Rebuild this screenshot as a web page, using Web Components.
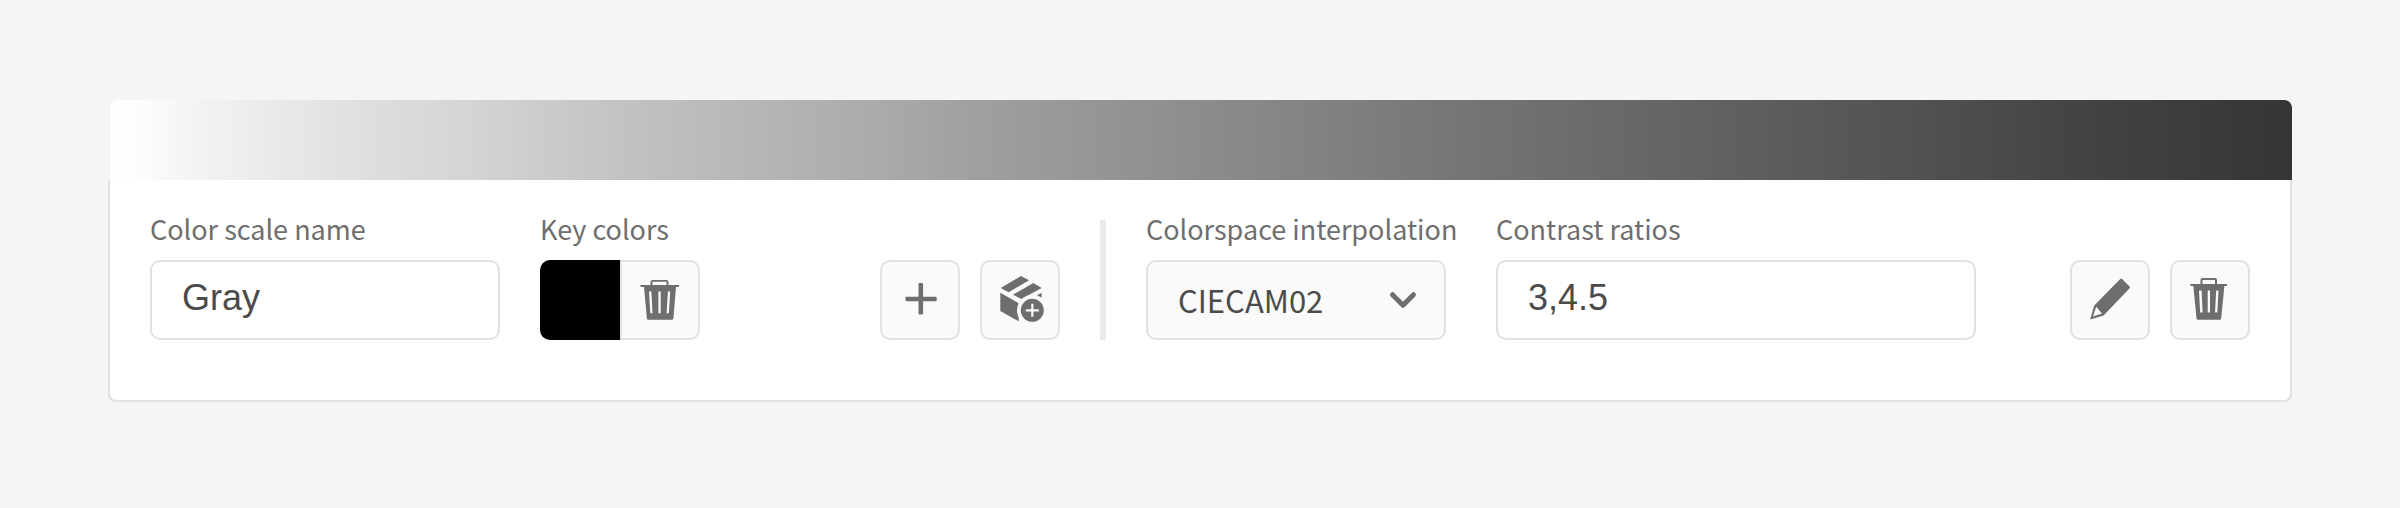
<!DOCTYPE html>
<html lang="en">
<head>
<meta charset="utf-8">
<title>Color scale</title>
<style>
body { margin: 0; background: #f5f5f5; color: #6e6e6e; font-family: "Noto Sans CJK SC", "Open Sans", sans-serif; }
</style>
</head>
<body>
<color-scale-card></color-scale-card>
<script>
const icons = {
  plus: '<path d="M38.5 24a1 1 0 0 1 1-1h2.6a1 1 0 0 1 1 1v12.700h12.600a1 1 0 0 1 1 1v2.600a1 1 0 0 1-1 1H43.100V53.500a1 1 0 0 1-1 1h-2.600a1 1 0 0 1-1-1V41.300H26.500a1 1 0 0 1-1-1v-2.600a1 1 0 0 1 1-1h12z"/>',
  box: '<path d="M41 16l8 4.300-20.300 12L20.700 28zM53.300 23l8.400 5-20.400 11L33 34.700zM20.300 32.700L38.700 43.200V61.300L20.300 51z"/><circle cx="52.300" cy="50.300" r="15.300" fill="#fafafa"/><path d="M57 35.300l4.700-2.500v4.700z"/><circle cx="52.300" cy="50.300" r="11.500"/><path d="M52.300 43.800v13M45.800 50.300h13" stroke="#fafafa" stroke-width="2.200"/>',
  pencil: '<path fill-rule="evenodd" d="M50.200 18.900q.9-.9 1.800 0l7.600 7.600q.9.900 0 1.800L33.600 55.400 21 59.200q-.9.200-.6-.7L24.300 45.500zM26.200 46.800L23 56.400 32 53.400z"/>',
  trash: '<path fill-rule="evenodd" d="M30.500 24v-4q0-2 2-2H45q2 0 2 2v4h10v2h-2.600l-3.200 32.300q-.2 1.500-1.600 1.500H28q-1.400 0-1.500-1.500L23.300 26h-3v-2zM32.500 24H45v-4H32.500zM29 31l1.200 21.500h2.400L31.600 30.500H29.500zM37.700 30.500V52.500h2.300V30.500zM46.200 30.500L45 52.500h2.300L48.500 31l-.4-.5z"/>',
  trashSmall: '<path fill-rule="evenodd" d="M30.500 25v-3.200q0-1.800 2-1.800H46.500q2 0 2 1.800V25H59v2h-3l-2.600 31.500q-.2 1.300-1.700 1.300H28.500q-1.500 0-1.600-1.300L24 27h-3.500v-2zM32.500 25H46.500v-3.200H32.500zM29 31.500l1.300 21.800h2.200L31.400 31.500zM38.400 31.500V53.300h2.300V31.500zM47.900 31.500L46.600 53.300h2.300L50.200 31.500z"/>'
};

class IconButton extends HTMLElement {
  connectedCallback() {
    this.attachShadow({ mode: 'open' }).innerHTML = `
      <style>
        :host { display: block; flex: none; }
        button { display: block; box-sizing: border-box; width: 80px; height: 80px; padding: 0;
          border: 2px solid #e1e1e1; border-radius: var(--button-radius, 10px); background: #fafafa; color: #6e6e6e; }
        svg { display: block; fill: currentColor; }
      </style>
      <button type="button" aria-label="${this.getAttribute('label')}">
        <svg width="76" height="76" viewBox="2 2 76 76" aria-hidden="true">${icons[this.getAttribute('icon')]}</svg>
      </button>`;
  }
}
customElements.define('icon-button', IconButton);

const fieldStyle = `
  :host { display: block; min-width: 0; }
  label { display: block; height: 40px; font-size: 27px; line-height: 18px; white-space: nowrap; }
`;

class TextField extends HTMLElement {
  connectedCallback() {
    this.attachShadow({ mode: 'open' }).innerHTML = `
      <style>
        ${fieldStyle}
        input { display: block; box-sizing: border-box; width: 100%; height: 80px; margin: 0; padding: 0 30px 4px;
          border: 2px solid #e1e1e1; border-radius: 10px; background: #fff; color: #4b4b4b;
          font-family: "Liberation Sans", Arial, sans-serif; font-size: 36px; }
      </style>
      <label for="field">${this.getAttribute('label')}</label>
      <input id="field" type="text" value="${this.getAttribute('value')}">`;
  }
}
customElements.define('text-field', TextField);

class SelectField extends HTMLElement {
  connectedCallback() {
    this.attachShadow({ mode: 'open' }).innerHTML = `
      <style>
        ${fieldStyle}
        .box { display: grid; }
        select, svg { grid-area: 1 / 1; }
        select { appearance: none; box-sizing: border-box; width: 100%; height: 80px; margin: 0; padding: 0 80px 2px 30px;
          border: 2px solid #e1e1e1; border-radius: 10px; background: #fafafa; color: #4b4b4b;
          font-family: inherit; font-size: 31px; }
        svg { justify-self: end; pointer-events: none; fill: none; stroke: #6e6e6e; stroke-width: 5; stroke-linecap: round; stroke-linejoin: round; }
      </style>
      <label for="field">${this.getAttribute('label')}</label>
      <div class="box">
        <select id="field"><option>${this.getAttribute('value')}</option></select>
        <svg width="80" height="80" viewBox="0 0 80 80" aria-hidden="true"><path d="M26.500 34.700L37 45.200 47.500 34.700"/></svg>
      </div>`;
  }
}
customElements.define('select-field', SelectField);

class KeyColors extends HTMLElement {
  connectedCallback() {
    this.attachShadow({ mode: 'open' }).innerHTML = `
      <style>
        ${fieldStyle}
        .pair { display: flex; }
        input { appearance: none; box-sizing: border-box; width: 80px; height: 80px; margin: 0; padding: 0;
          border: 0; border-radius: 10px 0 0 10px; background: #000; overflow: hidden; }
        input::-webkit-color-swatch-wrapper { padding: 0; }
        input::-webkit-color-swatch { border: 0; }
        icon-button { --button-radius: 0 10px 10px 0; }
      </style>
      <label for="swatch">Key colors</label>
      <div class="pair">
        <input id="swatch" type="color" value="#000000">
        <icon-button icon="trashSmall" label="Delete key color"></icon-button>
      </div>`;
  }
}
customElements.define('key-colors', KeyColors);

class ColorScaleCard extends HTMLElement {
  connectedCallback() {
    this.attachShadow({ mode: 'open' }).innerHTML = `
      <style>
        :host { display: block; padding: 100px 108px; }
        .ramp { height: 80px; margin-left: 2px; border-radius: 8px 8px 0 0;
          background: linear-gradient(to right, #fff 0%, #fefefe 1%, #f3f3f3 4%, #e8e8e8 8%, #dedede 12%, #d3d3d3 17%, #c6c6c6 22%, #b9b9b9 28%, #adadad 34%, #9f9f9f 40%, #929292 47%, #838383 55%, #757575 62%, #696969 69%, #5d5d5d 76%, #515151 83%, #444 90%, #353535 100%); }
        .body { display: flex; gap: 40px; padding: 40px 40px 60px;
          border: 2px solid #e1e1e1; border-top: 0; border-radius: 0 0 8px 8px; background: #fff; }
        .group { display: flex; align-items: flex-end; gap: 40px; min-width: 0; }
        .scale { flex: 1 1 910px; }
        .output { flex: 1 1 1104px; }
        .name { flex: 0 1 350px; }
        .space { gap: 50px; }
        .mode { flex: 0 1 300px; }
        .ratios { flex: 0 1 480px; }
        .actions { display: flex; gap: 20px; margin-left: auto; }
        .rule { flex: none; width: 6px; background: #eaeaea; }
      </style>
      <div class="ramp"></div>
      <div class="body">
        <div class="group scale">
          <text-field class="name" label="Color scale name" value="Gray"></text-field>
          <key-colors></key-colors>
          <div class="actions">
            <icon-button icon="plus" label="Add key color"></icon-button>
            <icon-button icon="box" label="Add bulk key colors"></icon-button>
          </div>
        </div>
        <div class="rule"></div>
        <div class="group output space">
          <select-field class="mode" label="Colorspace interpolation" value="CIECAM02"></select-field>
          <text-field class="ratios" label="Contrast ratios" value="3,4.5"></text-field>
          <div class="actions">
            <icon-button icon="pencil" label="Edit color scale"></icon-button>
            <icon-button icon="trash" label="Delete color scale"></icon-button>
          </div>
        </div>
      </div>`;
  }
}
customElements.define('color-scale-card', ColorScaleCard);
</script>
</body>
</html>
